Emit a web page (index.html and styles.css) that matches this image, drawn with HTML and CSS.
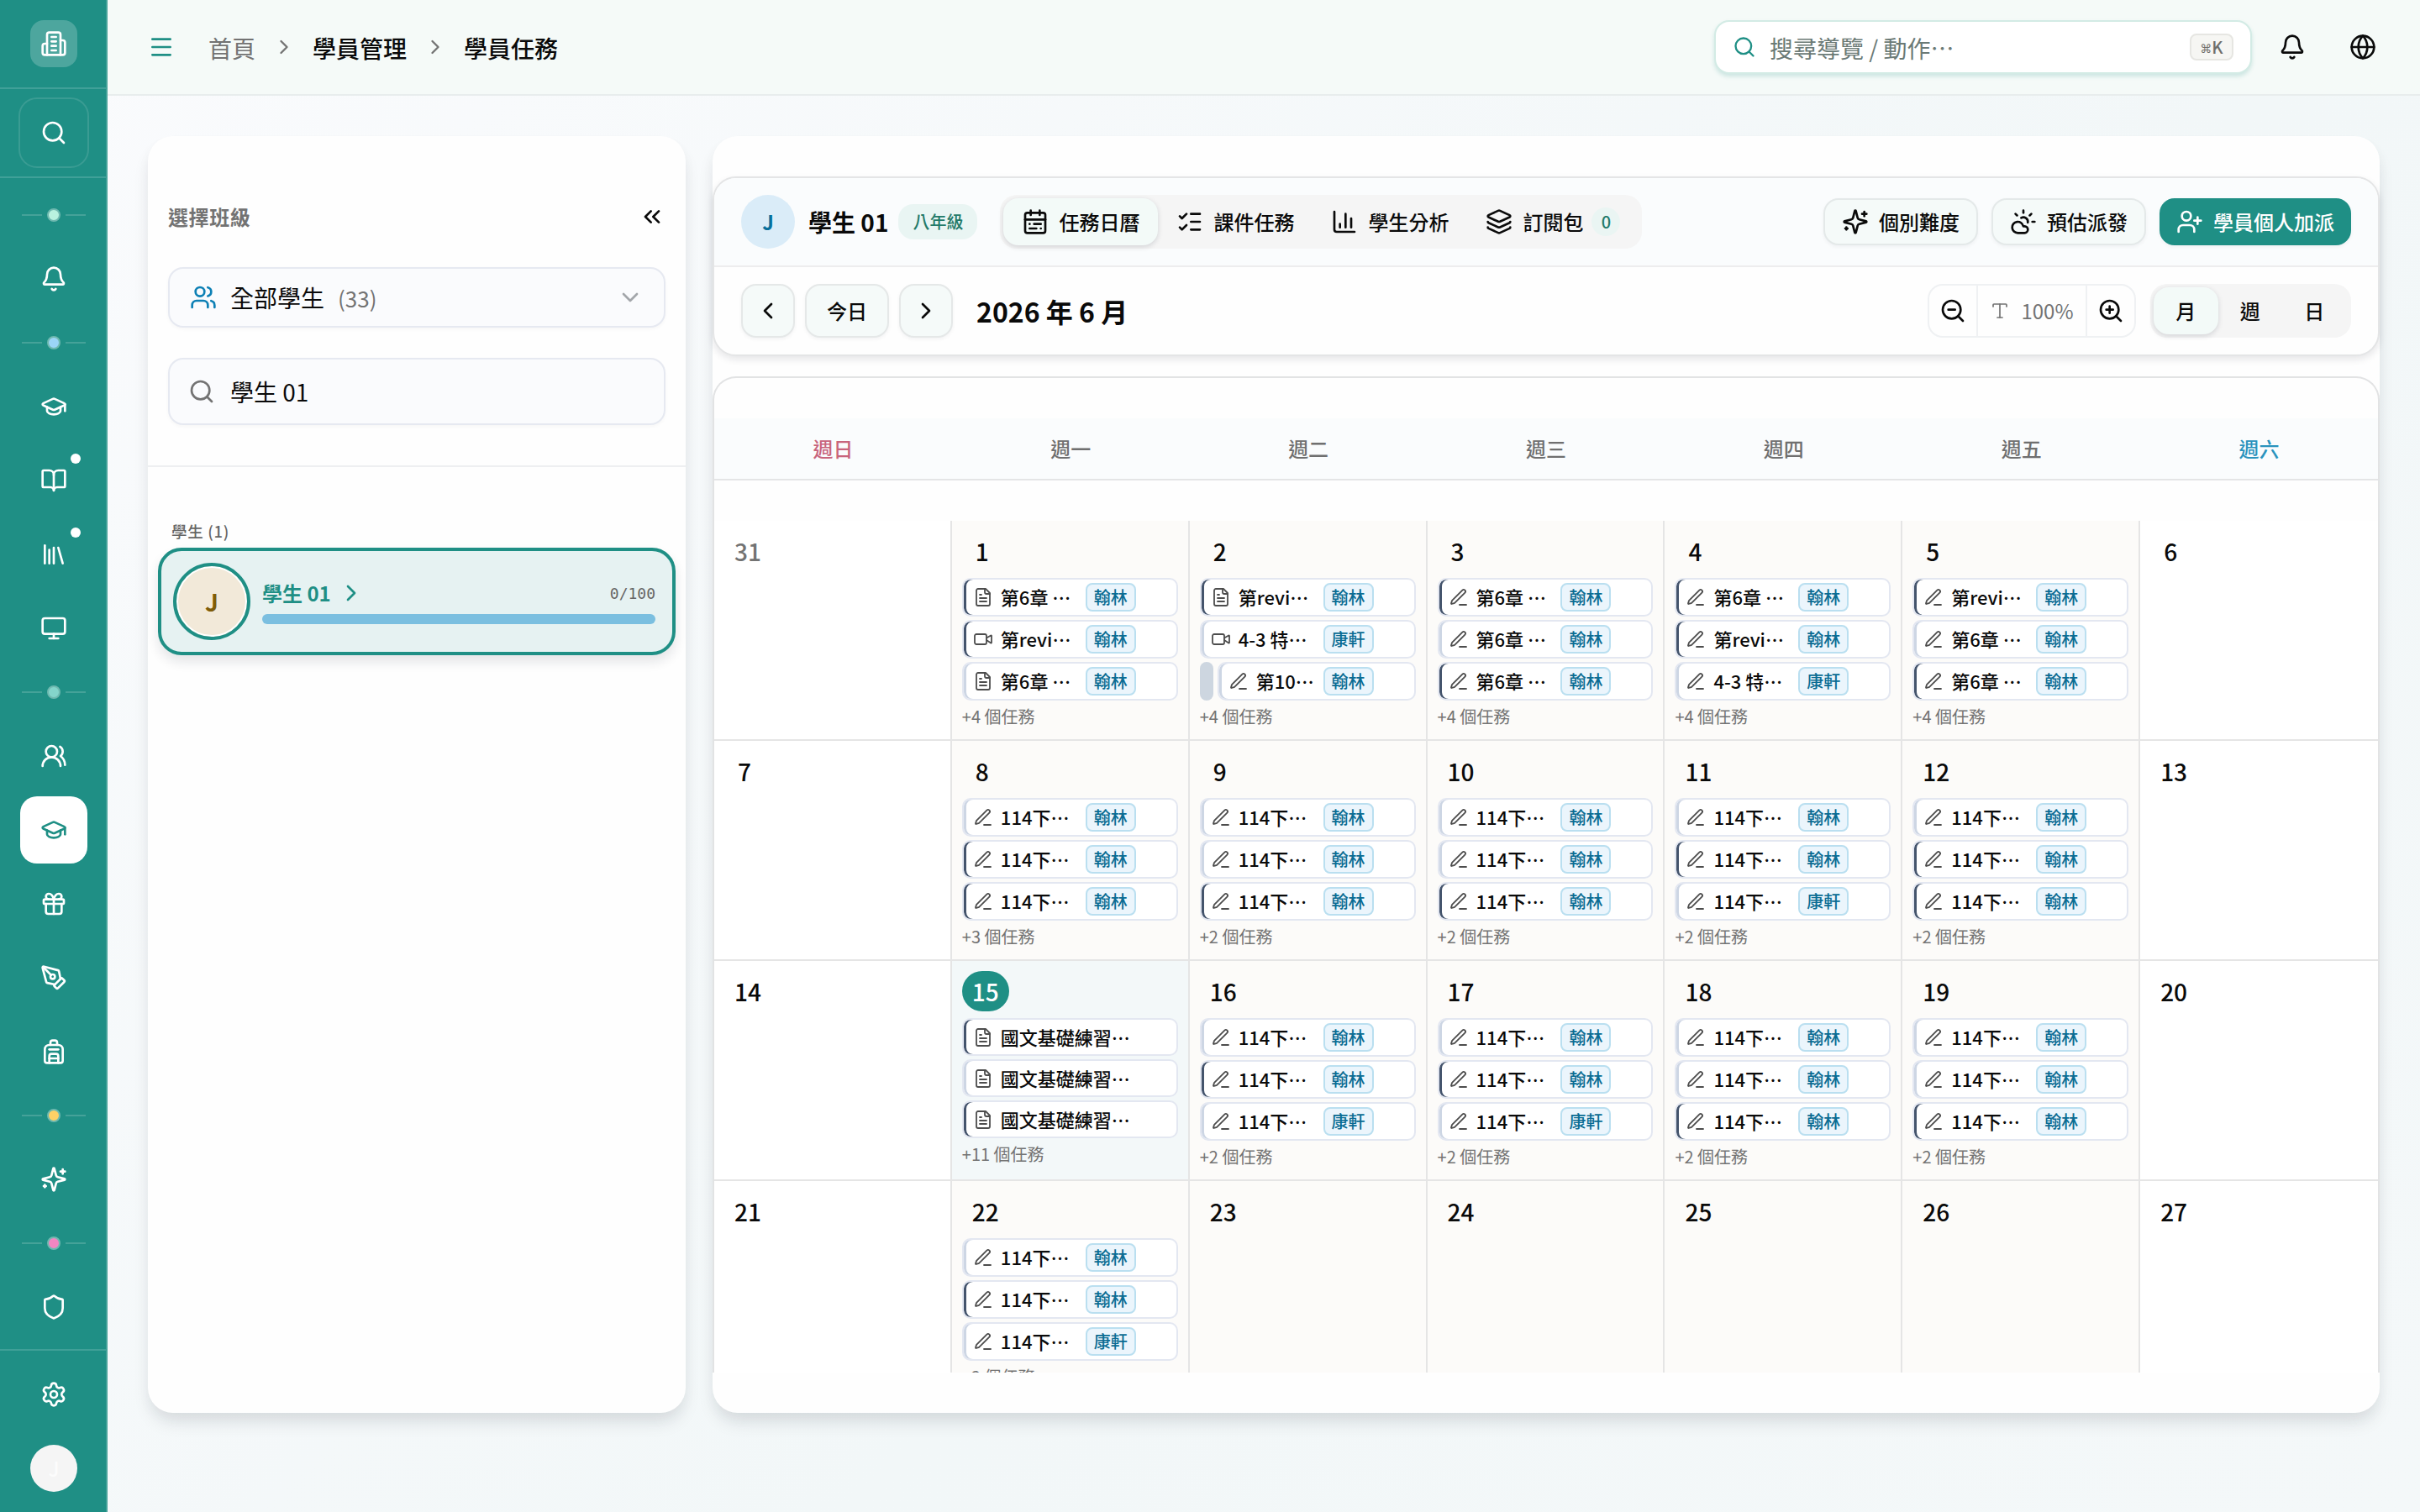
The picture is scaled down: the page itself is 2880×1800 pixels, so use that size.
FILE: index.html
```html
<!DOCTYPE html>
<html lang="zh-Hant">
<head>
<meta charset="utf-8">
<title>學員任務</title>
<link rel="stylesheet" href="styles.css">
</head>
<body>
<svg class="sprite" aria-hidden="true">
  <symbol id="building" viewBox="0 0 24 24"><path d="M6 22V4a2 2 0 0 1 2-2h8a2 2 0 0 1 2 2v18Z"/><path d="M6 12H4a2 2 0 0 0-2 2v6a2 2 0 0 0 2 2h2"/><path d="M18 9h2a2 2 0 0 1 2 2v9a2 2 0 0 1-2 2h-2"/><path d="M10 6h4M10 10h4M10 14h4M10 18h4"/></symbol>
  <symbol id="search" viewBox="0 0 24 24"><circle cx="11" cy="11" r="8"/><path d="m21 21-4.3-4.3"/></symbol>
  <symbol id="bell" viewBox="0 0 24 24"><path d="M10.268 21a2 2 0 0 0 3.464 0"/><path d="M3.262 15.326A1 1 0 0 0 4 17h16a1 1 0 0 0 .74-1.673C19.41 13.956 18 12.499 18 8A6 6 0 0 0 6 8c0 4.499-1.411 5.956-2.738 7.326"/></symbol>
  <symbol id="cap" viewBox="0 0 24 24"><path d="M21.42 10.922a1 1 0 0 0-.019-1.838L12.83 5.18a2 2 0 0 0-1.66 0L2.6 9.08a1 1 0 0 0 0 1.832l8.57 3.908a2 2 0 0 0 1.66 0z"/><path d="M22 10v6"/><path d="M6 12.5V16a6 3 0 0 0 12 0v-3.5"/></symbol>
  <symbol id="book" viewBox="0 0 24 24"><path d="M12 7v14"/><path d="M3 18a1 1 0 0 1-1-1V4a1 1 0 0 1 1-1h5a4 4 0 0 1 4 4 4 4 0 0 1 4-4h5a1 1 0 0 1 1 1v13a1 1 0 0 1-1 1h-6a3 3 0 0 0-3 3 3 3 0 0 0-3-3z"/></symbol>
  <symbol id="library" viewBox="0 0 24 24"><path d="m16 6 4 14"/><path d="M12 6v14"/><path d="M8 8v12"/><path d="M4 4v16"/></symbol>
  <symbol id="monitor" viewBox="0 0 24 24"><rect width="20" height="14" x="2" y="3" rx="2"/><path d="M8 21h8"/><path d="M12 17v4"/></symbol>
  <symbol id="users-round" viewBox="0 0 24 24"><path d="M18 21a8 8 0 0 0-16 0"/><circle cx="10" cy="8" r="5"/><path d="M22 20c0-3.37-2-6.5-4-8a5 5 0 0 0-.45-8.3"/></symbol>
  <symbol id="gift" viewBox="0 0 24 24"><rect x="3" y="8" width="18" height="4" rx="1"/><path d="M12 8v13"/><path d="M19 12v7a2 2 0 0 1-2 2H7a2 2 0 0 1-2-2v-7"/><path d="M7.5 8a2.5 2.5 0 0 1 0-5A4.8 8 0 0 1 12 8a4.8 8 0 0 1 4.5-5 2.5 2.5 0 0 1 0 5"/></symbol>
  <symbol id="pen-tool" viewBox="0 0 24 24"><path d="M15.707 21.293a1 1 0 0 1-1.414 0l-1.586-1.586a1 1 0 0 1 0-1.414l5.586-5.586a1 1 0 0 1 1.414 0l1.586 1.586a1 1 0 0 1 0 1.414z"/><path d="m18 13-1.375-6.874a1 1 0 0 0-.746-.776L3.235 2.028a1 1 0 0 0-1.207 1.207L5.35 15.879a1 1 0 0 0 .776.746L13 18"/><path d="m2.3 2.3 7.286 7.286"/><circle cx="11" cy="11" r="2"/></symbol>
  <symbol id="backpack" viewBox="0 0 24 24"><path d="M4 10a4 4 0 0 1 4-4h8a4 4 0 0 1 4 4v10a2 2 0 0 1-2 2H6a2 2 0 0 1-2-2z"/><path d="M8 10h8"/><path d="M8 18h8"/><path d="M8 22v-6a2 2 0 0 1 2-2h4a2 2 0 0 1 2 2v6"/><path d="M9 6V4a2 2 0 0 1 2-2h2a2 2 0 0 1 2 2v2"/></symbol>
  <symbol id="sparkles" viewBox="0 0 24 24"><path d="M9.937 15.5A2 2 0 0 0 8.5 14.063l-6.135-1.582a.5.5 0 0 1 0-.962L8.5 9.936A2 2 0 0 0 9.937 8.5l1.582-6.135a.5.5 0 0 1 .963 0L14.063 8.5A2 2 0 0 0 15.5 9.937l6.135 1.581a.5.5 0 0 1 0 .964L15.5 14.063a2 2 0 0 0-1.437 1.437l-1.582 6.135a.5.5 0 0 1-.963 0z"/><path d="M20 3v4"/><path d="M22 5h-4"/><path d="M4 17v2"/><path d="M5 18H3"/></symbol>
  <symbol id="shield" viewBox="0 0 24 24"><path d="M20 13c0 5-3.5 7.5-7.66 8.95a1 1 0 0 1-.67-.01C7.5 20.5 4 18 4 13V6a1 1 0 0 1 1-1c2 0 4.5-1.2 6.24-2.72a1.17 1.17 0 0 1 1.52 0C14.51 3.81 17 5 19 5a1 1 0 0 1 1 1z"/></symbol>
  <symbol id="settings" viewBox="0 0 24 24"><path d="M9.671 4.136a2.34 2.34 0 0 1 4.659 0 2.34 2.34 0 0 0 3.319 1.915 2.34 2.34 0 0 1 2.33 4.033 2.34 2.34 0 0 0 0 3.831 2.34 2.34 0 0 1-2.33 4.033 2.34 2.34 0 0 0-3.319 1.915 2.34 2.34 0 0 1-4.659 0 2.34 2.34 0 0 0-3.32-1.915 2.34 2.34 0 0 1-2.33-4.033 2.34 2.34 0 0 0 0-3.831A2.34 2.34 0 0 1 6.35 6.051a2.34 2.34 0 0 0 3.319-1.915"/><circle cx="12" cy="12" r="3"/></symbol>
  <symbol id="menu" viewBox="0 0 24 24"><path d="M4 5h16M4 12h16M4 19h16"/></symbol>
  <symbol id="right" viewBox="0 0 24 24"><path d="m9 18 6-6-6-6"/></symbol>
  <symbol id="left" viewBox="0 0 24 24"><path d="m15 18-6-6 6-6"/></symbol>
  <symbol id="down" viewBox="0 0 24 24"><path d="m6 9 6 6 6-6"/></symbol>
  <symbol id="collapse" viewBox="0 0 24 24"><path d="m11 17-5-5 5-5"/><path d="m18 17-5-5 5-5"/></symbol>
  <symbol id="globe" viewBox="0 0 24 24"><circle cx="12" cy="12" r="10"/><path d="M12 2a14.5 14.5 0 0 0 0 20 14.5 14.5 0 0 0 0-20"/><path d="M2 12h20"/></symbol>
  <symbol id="users" viewBox="0 0 24 24"><path d="M16 21v-2a4 4 0 0 0-4-4H6a4 4 0 0 0-4 4v2"/><path d="M16 3.128a4 4 0 0 1 0 7.744"/><path d="M22 21v-2a4 4 0 0 0-3-3.87"/><circle cx="9" cy="7" r="4"/></symbol>
  <symbol id="calendar" viewBox="0 0 24 24"><rect width="18" height="18" x="3" y="4" rx="2"/><path d="M16 2v4"/><path d="M3 10h18"/><path d="M8 2v4"/><path d="M17 14h-6"/><path d="M13 18H7"/><path d="M7 14h.01"/><path d="M17 18h.01"/></symbol>
  <symbol id="checks" viewBox="0 0 24 24"><path d="M13 5h8M13 12h8M13 19h8"/><path d="m3 17 2 2 4-4"/><path d="m3 7 2 2 4-4"/></symbol>
  <symbol id="chart" viewBox="0 0 24 24"><path d="M3 3v16a2 2 0 0 0 2 2h16"/><path d="M18 17V9"/><path d="M13 17V5"/><path d="M8 17v-3"/></symbol>
  <symbol id="layers" viewBox="0 0 24 24"><path d="M12.83 2.18a2 2 0 0 0-1.66 0L2.6 6.08a1 1 0 0 0 0 1.83l8.58 3.91a2 2 0 0 0 1.66 0l8.58-3.9a1 1 0 0 0 0-1.83z"/><path d="M2 12a1 1 0 0 0 .58.91l8.6 3.91a2 2 0 0 0 1.65 0l8.58-3.9A1 1 0 0 0 22 12"/><path d="M2 17a1 1 0 0 0 .58.91l8.6 3.91a2 2 0 0 0 1.65 0l8.58-3.9A1 1 0 0 0 22 17"/></symbol>
  <symbol id="cloud-sun" viewBox="0 0 24 24"><path d="M12 2v2"/><path d="m4.93 4.93 1.41 1.41"/><path d="M20 12h2"/><path d="m19.07 4.93-1.41 1.41"/><path d="M15.947 12.65a4 4 0 0 0-5.925-4.128"/><path d="M13 22H7a5 5 0 1 1 4.9-6H13a3 3 0 0 1 0 6Z"/></symbol>
  <symbol id="user-plus" viewBox="0 0 24 24"><path d="M16 21v-2a4 4 0 0 0-4-4H6a4 4 0 0 0-4 4v2"/><circle cx="9" cy="7" r="4"/><path d="M19 8v6"/><path d="M22 11h-6"/></symbol>
  <symbol id="zoom-out" viewBox="0 0 24 24"><circle cx="11" cy="11" r="8"/><path d="m21 21-4.35-4.35M8 11h6"/></symbol>
  <symbol id="zoom-in" viewBox="0 0 24 24"><circle cx="11" cy="11" r="8"/><path d="m21 21-4.35-4.35M11 8v6M8 11h6"/></symbol>
  <symbol id="type" viewBox="0 0 24 24"><path d="M12 4v16"/><path d="M4 7V5a1 1 0 0 1 1-1h14a1 1 0 0 1 1 1v2"/><path d="M9 20h6"/></symbol>
  <symbol id="doc" viewBox="0 0 24 24"><path d="M15 2H6a2 2 0 0 0-2 2v16a2 2 0 0 0 2 2h12a2 2 0 0 0 2-2V7Z"/><path d="M14 2v4a2 2 0 0 0 2 2h4"/><path d="M10 9H8M16 13H8M16 17H8"/></symbol>
  <symbol id="video" viewBox="0 0 24 24"><path d="m16 13 5.223 3.482a.5.5 0 0 0 .777-.416V7.87a.5.5 0 0 0-.752-.432L16 10.5"/><rect x="2" y="6" width="14" height="12" rx="2"/></symbol>
  <symbol id="pen" viewBox="0 0 24 24"><path d="M13 21h8"/><path d="M16.376 3.622a1 1 0 0 1 3.002 3.002L7.368 18.635a2 2 0 0 1-.855.506l-2.872.838a.5.5 0 0 1-.62-.62l.838-2.872a2 2 0 0 1 .506-.854z"/></symbol>
</svg>

<div class="app">
  <aside class="sidebar">
    <div class="brand"><span class="logo"><svg><use href="#building"/></svg></span></div>
    <div class="quick"><span class="quick-btn"><svg><use href="#search"/></svg></span></div>
    <nav class="nav">
      <div class="sep"><i class="mint"></i></div>
      <a class="item"><svg><use href="#bell"/></svg></a>
      <div class="sep"><i class="sky"></i></div>
      <a class="item"><svg><use href="#cap"/></svg></a>
      <a class="item dot"><svg><use href="#book"/></svg></a>
      <a class="item dot"><svg><use href="#library"/></svg></a>
      <a class="item"><svg><use href="#monitor"/></svg></a>
      <div class="sep"><i class="teal"></i></div>
      <a class="item"><svg><use href="#users-round"/></svg></a>
      <a class="item active"><svg><use href="#cap"/></svg></a>
      <a class="item"><svg><use href="#gift"/></svg></a>
      <a class="item"><svg><use href="#pen-tool"/></svg></a>
      <a class="item"><svg><use href="#backpack"/></svg></a>
      <div class="sep"><i class="amber"></i></div>
      <a class="item"><svg><use href="#sparkles"/></svg></a>
      <div class="sep"><i class="pink"></i></div>
      <a class="item"><svg><use href="#shield"/></svg></a>
    </nav>
    <div class="foot">
      <a class="item"><svg><use href="#settings"/></svg></a>
      <span class="me">J</span>
    </div>
  </aside>

  <div class="page">
    <header class="topbar">
      <svg class="burger"><use href="#menu"/></svg>
      <div class="crumbs">
        <span class="muted">首頁</span><svg><use href="#right"/></svg><span>學員管理</span><svg><use href="#right"/></svg><span>學員任務</span>
      </div>
      <div class="command"><svg><use href="#search"/></svg><span>搜尋導覽 / 動作…</span><kbd><i>⌘</i>K</kbd></div>
      <svg class="top-icon"><use href="#bell"/></svg>
      <svg class="top-icon"><use href="#globe"/></svg>
    </header>

    <main class="main">
      <section class="roster">
        <div class="filters">
          <div class="filters-head"><h2>選擇班級</h2><svg><use href="#collapse"/></svg></div>
          <div class="select"><svg class="blue"><use href="#users"/></svg><span>全部學生</span><small>(33)</small><svg class="caret"><use href="#down"/></svg></div>
          <div class="find"><svg><use href="#search"/></svg><span>學生 01</span></div>
        </div>
        <div class="students">
          <h3>學生 (1)</h3>
          <div class="student">
            <span class="face">J</span>
            <div class="info">
              <div class="line"><b>學生 01</b><svg><use href="#right"/></svg><span class="score">0/100</span></div>
              <div class="bar"></div>
            </div>
          </div>
        </div>
      </section>

      <section class="board">
        <div class="panel">
          <div class="row head">
            <span class="avatar">J</span><h1>學生 01</h1><span class="grade">八年級</span>
            <div class="tabs">
              <a class="tab on"><svg><use href="#calendar"/></svg>任務日曆</a>
              <a class="tab"><svg><use href="#checks"/></svg>課件任務</a>
              <a class="tab"><svg><use href="#chart"/></svg>學生分析</a>
              <a class="tab"><svg><use href="#layers"/></svg>訂閱包<em>0</em></a>
            </div>
            <div class="actions">
              <a class="btn"><svg><use href="#sparkles"/></svg>個別難度</a>
              <a class="btn"><svg><use href="#cloud-sun"/></svg>預估派發</a>
              <a class="btn primary"><svg><use href="#user-plus"/></svg>學員個人加派</a>
            </div>
          </div>
          <div class="row tools">
            <a class="step"><svg><use href="#left"/></svg></a><a class="step today-btn">今日</a><a class="step"><svg><use href="#right"/></svg></a>
            <h2>2026 年 6 月</h2>
            <div class="zoom">
              <a><svg><use href="#zoom-out"/></svg></a><span><svg><use href="#type"/></svg>100%</span><a><svg><use href="#zoom-in"/></svg></a>
            </div>
            <div class="views"><a class="on">月</a><a>週</a><a>日</a></div>
          </div>
        </div>

        <div class="calendar">
          <div class="week names"><span class="sun">週日</span><span>週一</span><span>週二</span><span>週三</span><span>週四</span><span>週五</span><span class="sat">週六</span></div>
          <div class="weeks">
            <div class="week">
              <div class="day off out"><b>31</b></div>
              <div class="day"><b>1</b>
                <p class="ev dk"><svg><use href="#doc"/></svg><span>第6章 …</span><i>翰林</i></p>
                <p class="ev dk"><svg><use href="#video"/></svg><span>第revi…</span><i>翰林</i></p>
                <p class="ev"><svg><use href="#doc"/></svg><span>第6章 …</span><i>翰林</i></p>
                <small>+4 個任務</small></div>
              <div class="day"><b>2</b>
                <p class="ev dk"><svg><use href="#doc"/></svg><span>第revi…</span><i>翰林</i></p>
                <p class="ev"><svg><use href="#video"/></svg><span>4-3 特…</span><i>康軒</i></p>
                <div class="linked"><u></u><p class="ev"><svg><use href="#pen"/></svg><span>第10…</span><i>翰林</i></p></div>
                <small>+4 個任務</small></div>
              <div class="day"><b>3</b>
                <p class="ev dk"><svg><use href="#pen"/></svg><span>第6章 …</span><i>翰林</i></p>
                <p class="ev"><svg><use href="#pen"/></svg><span>第6章 …</span><i>翰林</i></p>
                <p class="ev dk"><svg><use href="#pen"/></svg><span>第6章 …</span><i>翰林</i></p>
                <small>+4 個任務</small></div>
              <div class="day"><b>4</b>
                <p class="ev dk"><svg><use href="#pen"/></svg><span>第6章 …</span><i>翰林</i></p>
                <p class="ev dk"><svg><use href="#pen"/></svg><span>第revi…</span><i>翰林</i></p>
                <p class="ev"><svg><use href="#pen"/></svg><span>4-3 特…</span><i>康軒</i></p>
                <small>+4 個任務</small></div>
              <div class="day"><b>5</b>
                <p class="ev dk"><svg><use href="#pen"/></svg><span>第revi…</span><i>翰林</i></p>
                <p class="ev"><svg><use href="#pen"/></svg><span>第6章 …</span><i>翰林</i></p>
                <p class="ev dk"><svg><use href="#pen"/></svg><span>第6章 …</span><i>翰林</i></p>
                <small>+4 個任務</small></div>
              <div class="day off"><b>6</b></div>
            </div>
            <div class="week">
              <div class="day off"><b>7</b></div>
              <div class="day"><b>8</b>
                <p class="ev"><svg><use href="#pen"/></svg><span>114下…</span><i>翰林</i></p>
                <p class="ev dk"><svg><use href="#pen"/></svg><span>114下…</span><i>翰林</i></p>
                <p class="ev dk"><svg><use href="#pen"/></svg><span>114下…</span><i>翰林</i></p>
                <small>+3 個任務</small></div>
              <div class="day"><b>9</b>
                <p class="ev"><svg><use href="#pen"/></svg><span>114下…</span><i>翰林</i></p>
                <p class="ev"><svg><use href="#pen"/></svg><span>114下…</span><i>翰林</i></p>
                <p class="ev dk"><svg><use href="#pen"/></svg><span>114下…</span><i>翰林</i></p>
                <small>+2 個任務</small></div>
              <div class="day"><b>10</b>
                <p class="ev"><svg><use href="#pen"/></svg><span>114下…</span><i>翰林</i></p>
                <p class="ev"><svg><use href="#pen"/></svg><span>114下…</span><i>翰林</i></p>
                <p class="ev dk"><svg><use href="#pen"/></svg><span>114下…</span><i>翰林</i></p>
                <small>+2 個任務</small></div>
              <div class="day"><b>11</b>
                <p class="ev"><svg><use href="#pen"/></svg><span>114下…</span><i>翰林</i></p>
                <p class="ev dk"><svg><use href="#pen"/></svg><span>114下…</span><i>翰林</i></p>
                <p class="ev"><svg><use href="#pen"/></svg><span>114下…</span><i>康軒</i></p>
                <small>+2 個任務</small></div>
              <div class="day"><b>12</b>
                <p class="ev"><svg><use href="#pen"/></svg><span>114下…</span><i>翰林</i></p>
                <p class="ev dk"><svg><use href="#pen"/></svg><span>114下…</span><i>翰林</i></p>
                <p class="ev dk"><svg><use href="#pen"/></svg><span>114下…</span><i>翰林</i></p>
                <small>+2 個任務</small></div>
              <div class="day off"><b>13</b></div>
            </div>
            <div class="week">
              <div class="day off"><b>14</b></div>
              <div class="day today"><b>15</b>
                <p class="ev plain dk"><svg><use href="#doc"/></svg><span>國文基礎練習…</span></p>
                <p class="ev plain"><svg><use href="#doc"/></svg><span>國文基礎練習…</span></p>
                <p class="ev plain dk"><svg><use href="#doc"/></svg><span>國文基礎練習…</span></p>
                <small>+11 個任務</small></div>
              <div class="day"><b>16</b>
                <p class="ev"><svg><use href="#pen"/></svg><span>114下…</span><i>翰林</i></p>
                <p class="ev dk"><svg><use href="#pen"/></svg><span>114下…</span><i>翰林</i></p>
                <p class="ev"><svg><use href="#pen"/></svg><span>114下…</span><i>康軒</i></p>
                <small>+2 個任務</small></div>
              <div class="day"><b>17</b>
                <p class="ev"><svg><use href="#pen"/></svg><span>114下…</span><i>翰林</i></p>
                <p class="ev dk"><svg><use href="#pen"/></svg><span>114下…</span><i>翰林</i></p>
                <p class="ev"><svg><use href="#pen"/></svg><span>114下…</span><i>康軒</i></p>
                <small>+2 個任務</small></div>
              <div class="day"><b>18</b>
                <p class="ev"><svg><use href="#pen"/></svg><span>114下…</span><i>翰林</i></p>
                <p class="ev"><svg><use href="#pen"/></svg><span>114下…</span><i>翰林</i></p>
                <p class="ev dk"><svg><use href="#pen"/></svg><span>114下…</span><i>翰林</i></p>
                <small>+2 個任務</small></div>
              <div class="day"><b>19</b>
                <p class="ev"><svg><use href="#pen"/></svg><span>114下…</span><i>翰林</i></p>
                <p class="ev"><svg><use href="#pen"/></svg><span>114下…</span><i>翰林</i></p>
                <p class="ev dk"><svg><use href="#pen"/></svg><span>114下…</span><i>翰林</i></p>
                <small>+2 個任務</small></div>
              <div class="day off"><b>20</b></div>
            </div>
            <div class="week">
              <div class="day off"><b>21</b></div>
              <div class="day"><b>22</b>
                <p class="ev"><svg><use href="#pen"/></svg><span>114下…</span><i>翰林</i></p>
                <p class="ev dk"><svg><use href="#pen"/></svg><span>114下…</span><i>翰林</i></p>
                <p class="ev"><svg><use href="#pen"/></svg><span>114下…</span><i>康軒</i></p>
                <small>+2 個任務</small></div>
              <div class="day"><b>23</b></div>
              <div class="day"><b>24</b></div>
              <div class="day"><b>25</b></div>
              <div class="day"><b>26</b></div>
              <div class="day off"><b>27</b></div>
            </div>
          </div>
        </div>
      </section>
    </main>
  </div>
</div>
</body>
</html>
```
FILE: styles.css
```css
* { box-sizing: border-box; margin: 0; padding: 0; }
body {
  width: 2880px; height: 1800px; overflow: hidden;
  font-family: "Noto Sans CJK TC", sans-serif;
  font-size: 24px; line-height: 1.5; color: #0a0a0a;
}
.sprite { display: none; }
svg { width: 32px; height: 32px; flex: none; fill: none; stroke: currentColor; stroke-width: 2; stroke-linecap: round; stroke-linejoin: round; }
a, span, b, i, em, small, kbd { font-style: normal; }
h1, h2, h3 { font-weight: 600; }
.app { display: flex; height: 1800px; background: linear-gradient(135deg, #fafbfd 0%, #f2f7f8 60%, #f4f8f9 100%); }

/* sidebar */
.sidebar { width: 128px; flex: none; display: flex; flex-direction: column; background: #1f8f85; border-right: 2px solid #45a299; color: #fff; }
.brand { height: 106px; padding: 24px 0 0 36px; border-bottom: 2px solid #40a098; }
.logo { width: 56px; height: 56px; border-radius: 16px; background: #4da69e; display: grid; place-items: center; }
.quick { height: 106px; padding: 10px 0 0 22px; border-bottom: 2px solid #40a098; }
.quick-btn { width: 84px; height: 84px; border: 2px solid #3a9c93; border-radius: 22px; display: grid; place-items: center; }
.nav { flex: 1; display: flex; flex-direction: column; padding: 8px 0 0 24px; }
.item { position: relative; width: 80px; height: 80px; border-radius: 20px; display: grid; place-items: center; flex: none; }
.item + .item { margin-top: 8px; }
.item.active { background: #fff; color: #1f8f85; }
.item.dot::after { content: ""; position: absolute; right: 8px; top: 8px; width: 12px; height: 12px; border-radius: 50%; background: #fff; }
.sep { width: 80px; height: 72px; flex: none; display: flex; align-items: center; justify-content: center; gap: 6px; }
.sep::before, .sep::after { content: ""; width: 24px; height: 2px; background: #45a299; }
.sep i { width: 16px; height: 16px; border-radius: 50%; border: 2px solid #6fb9b0; }
.mint { background: #b9f2df; } .sky { background: #9bd5f7; } .teal { background: #84d5cb; }
.amber { background: #ffd166; } .pink { background: #f386c2; }
.foot { height: 194px; border-top: 2px solid #40a098; padding: 12px 0 0 24px; }
.me { display: grid; place-items: center; width: 56px; height: 56px; margin: 20px 0 0 12px; border-radius: 50%; background: #f5f5f5; color: #fcfcfc; font-weight: 500; }

/* top bar */
.page { flex: 1; display: flex; flex-direction: column; min-width: 0; }
.topbar { height: 114px; padding: 0 52px 0 48px; display: flex; align-items: center; background: #f5faf8; border-bottom: 2px solid #e8eded; }
.burger { color: #1f8f85; }
.crumbs { display: flex; align-items: center; gap: 20px; margin-left: 40px; font-size: 28px; font-weight: 500; }
.crumbs svg { width: 28px; height: 28px; color: #737373; }
.crumbs span, .command span { padding-top: 2px; }
.crumbs .muted { color: #737373; font-weight: 400; }
.command { width: 640px; height: 64px; margin-left: auto; margin-right: 32px; padding: 0 20px; display: flex; align-items: center; gap: 16px; background: #fff; border: 2px solid #d3ebe5; border-radius: 18px; box-shadow: 0 3px 5px #1f8f8530; color: #6b7a76; font-size: 28px; }
.command svg { width: 28px; height: 28px; color: #1f8f85; }
.command kbd { margin-left: auto; width: 52px; height: 32px; border: 2px solid #e6e6e2; border-radius: 8px; background: #f6f6f3; color: #6f6f6b; font: 500 20px/27px "Noto Sans CJK TC", sans-serif; text-align: center; }
.command kbd i { font: 14px "DejaVu Sans", sans-serif; vertical-align: 1px; }
.top-icon + .top-icon { margin-left: 52px; }

/* main */
.main { height: 1520px; margin: 48px 48px 0 48px; display: flex; gap: 32px; }
.roster, .board { background: #fefefe; border-radius: 30px; box-shadow: 0 14px 22px -4px #0f172a1c, 0 8px 16px #0f172a08; }
.roster { width: 640px; flex: none; }
.filters { height: 394px; padding: 76px 24px 0; border-bottom: 2px solid #eeeff1; }
.filters-head { display: flex; align-items: center; justify-content: space-between; height: 40px; }
.filters-head h2 { font-size: 24px; letter-spacing: .6px; color: #737373; }
.select, .find { display: flex; align-items: center; padding: 0 24px; background: #fafbfd; border: 2px solid #e6e9f1; border-radius: 18px; font-size: 28px; box-shadow: 0 2px 4px #0f172a08; }
.select { height: 72px; margin-top: 40px; }
.find { height: 80px; margin-top: 36px; padding-left: 22px; }
.select span { margin-left: 16px; }
.find span { margin-left: 18px; }
.blue { color: #0d80b5; }
.select small { font-size: 26px; color: #737373; margin-left: 16px; }
.caret { margin-left: auto; color: #a3a6aa; }
.find svg { color: #737373; }
.students { padding: 60px 12px 0; }
.students h3 { height: 36px; padding-left: 16px; font-size: 18.5px; line-height: 32px; font-weight: 500; letter-spacing: .7px; color: #666; }
.student { height: 128px; display: flex; align-items: center; gap: 14px; padding: 0 20px 0 14px; border: 4px solid #1f8f85; border-radius: 28px; background: #e6f2f2; box-shadow: 0 8px 14px #0f172a1c; }
.face { width: 92px; height: 92px; flex: none; border: 4px solid #1f8f85; border-radius: 50%; box-shadow: inset 0 0 0 2px #fff; background: #f2e9d9; color: #7f5c08; font-weight: 600; font-size: 28px; display: grid; place-items: center; }
.info { flex: 1; }
.line { display: flex; align-items: center; height: 34px; color: #1f8f85; }
.line svg { width: 32px; height: 32px; margin-left: 8px; }
.line b { font-weight: 700; }
.score { margin-left: auto; font: 18px "DejaVu Sans Mono", monospace; color: #666; }
.bar { height: 12px; margin-top: 8px; border-radius: 6px; background: #7bbfe0; }

.board { flex: 1; min-width: 0; padding: 48px 0; display: flex; flex-direction: column; gap: 24px; }
.panel { height: 214px; flex: none; border: 2px solid #e4e5e6; border-radius: 28px; box-shadow: 0 4px 8px #0f172a1a; background: #fefefe; }
.row { display: flex; align-items: center; padding: 0 32px; }
.head { height: 106px; background: #fafcfd; border-bottom: 2px solid #ededee; border-radius: 26px 26px 0 0; }
.tools { height: 104px; }
.avatar { width: 64px; height: 64px; border-radius: 50%; background: #daecf8; color: #08709c; font-weight: 600; display: grid; place-items: center; }
.head h1 { font-size: 28px; margin-left: 16px; }
.grade { margin-left: 12px; width: 94px; height: 42px; border-radius: 18px; background: #e9f5f3; color: #237a69; font-size: 20px; font-weight: 500; line-height: 42px; text-align: center; }
.tabs { height: 64px; margin-left: 27px; padding: 4px; display: flex; border-radius: 20px; background: #f5f5f5; }
.tab { height: 56px; display: flex; align-items: center; gap: 12px; padding: 0 22px; border-radius: 18px; font-weight: 500; }
.on { background: #f3faf8; box-shadow: 0 2px 6px #0f172a26; }
.tab em { width: 34px; height: 34px; margin-left: -2px; border-radius: 17px; background: #eaf5f3; color: #237a69; font-size: 20px; line-height: 34px; text-align: center; }
.actions { margin-left: auto; display: flex; gap: 16px; }
.btn { height: 56px; display: flex; align-items: center; gap: 12px; padding: 0 20px; border: 2px solid #e4e9e9; border-radius: 18px; background: #f5faf9; font-weight: 500; box-shadow: 0 2px 4px #0f172a0c; }
.primary { padding: 0 18px; background: #1f8f85; border-color: #1f8f85; color: #fff; }
.step { width: 64px; height: 64px; margin-right: 12px; display: grid; place-items: center; background: #f5faf9; border: 2px solid #e5e8e8; border-radius: 18px; font-weight: 500; box-shadow: 0 2px 4px #0f172a0c; }
.today-btn { width: 100px; }
.tools h2 { margin-left: 16px; font-size: 32px; font-weight: 700; }
.zoom { margin-left: auto; width: 248px; height: 64px; display: flex; border: 2px solid #eff1f3; border-radius: 18px; }
.zoom a { width: 56px; display: grid; place-items: center; }
.zoom span { flex: 1; display: flex; align-items: center; justify-content: center; gap: 13px; color: #737373; border: solid #eff1f3; border-width: 0 2px; }
.zoom span svg { width: 24px; height: 24px; stroke-width: 1.7; }
.views { margin-left: 17px; width: 239px; height: 64px; padding: 4px; display: flex; background: #f5f5f5; border-radius: 20px; font-weight: 500; }
.views a { width: 76.5px; height: 56px; border-radius: 18px; display: grid; place-items: center; }

/* calendar */
.calendar { flex: 1; min-height: 0; border: solid #e2e3e4; border-width: 2px 2px 0; border-radius: 28px 28px 0 0; padding-top: 48px; display: flex; flex-direction: column; }
.week { display: grid; grid-template-columns: repeat(7, minmax(0, 1fr)); }
.names { height: 74px; flex: none; background: #fafcfd; border-bottom: 2px solid #e4e5e6; line-height: 72px; text-align: center; font-weight: 500; color: #6f6f6f; }
.names .sun { color: #c8647c; } .names .sat { color: #2a93bd; }
.weeks { flex: 1; min-height: 0; margin-top: 48px; overflow: hidden; }
.weeks .week { height: 262px; grid-template-rows: 262px; }
.day { padding: 12px 12px 0; border: solid #e5e5e5; border-width: 0 2px 2px 0; background: #fcfbf9; display: flex; flex-direction: column; }
.day:last-child { border-right: 0; }
.day.off { background: #fff; }
.day.today { background: #f3f8f9; }
.day b { align-self: flex-start; flex: none; height: 48px; min-width: 48px; padding: 0 12px; margin-bottom: 8px; font-size: 28px; font-weight: 500; line-height: 48px; text-align: center; border-radius: 28px; }
.out b { color: #737373; }
.today b { background: #1f8f85; color: #fff; }
.ev { flex: none; height: 46px; margin-bottom: 4px; display: flex; align-items: center; padding: 0 48px 0 11px; border: 2px solid #e3e7f1; border-radius: 10px; background: #fff; box-shadow: inset 3px 0 0 #cdd6e4; font-size: 22px; line-height: 40px; font-weight: 500; white-space: nowrap; }
.ev.dk { box-shadow: inset 3px 0 0 #44546c; }
.ev svg { width: 24px; height: 24px; color: #4d4d4d; margin-right: 9px; stroke-width: 1.8; }
.ev span { flex: 1; min-width: 0; height: 42px; }
.ev i { flex: none; width: 60px; height: 34px; border: 2px solid #badff0; border-radius: 8px; background: #ebf5fc; color: #0a6c93; font-size: 20px; line-height: 30px; text-align: center; }
.ev.plain { height: 45px; }
.linked { display: flex; gap: 5px; }
.linked u { width: 16px; height: 46px; border-radius: 8px; background: #cdd6e0; }
.linked .ev { flex: 1; }
.day small { font-size: 20px; line-height: 32px; margin-top: -1px; color: #737373; }
```
